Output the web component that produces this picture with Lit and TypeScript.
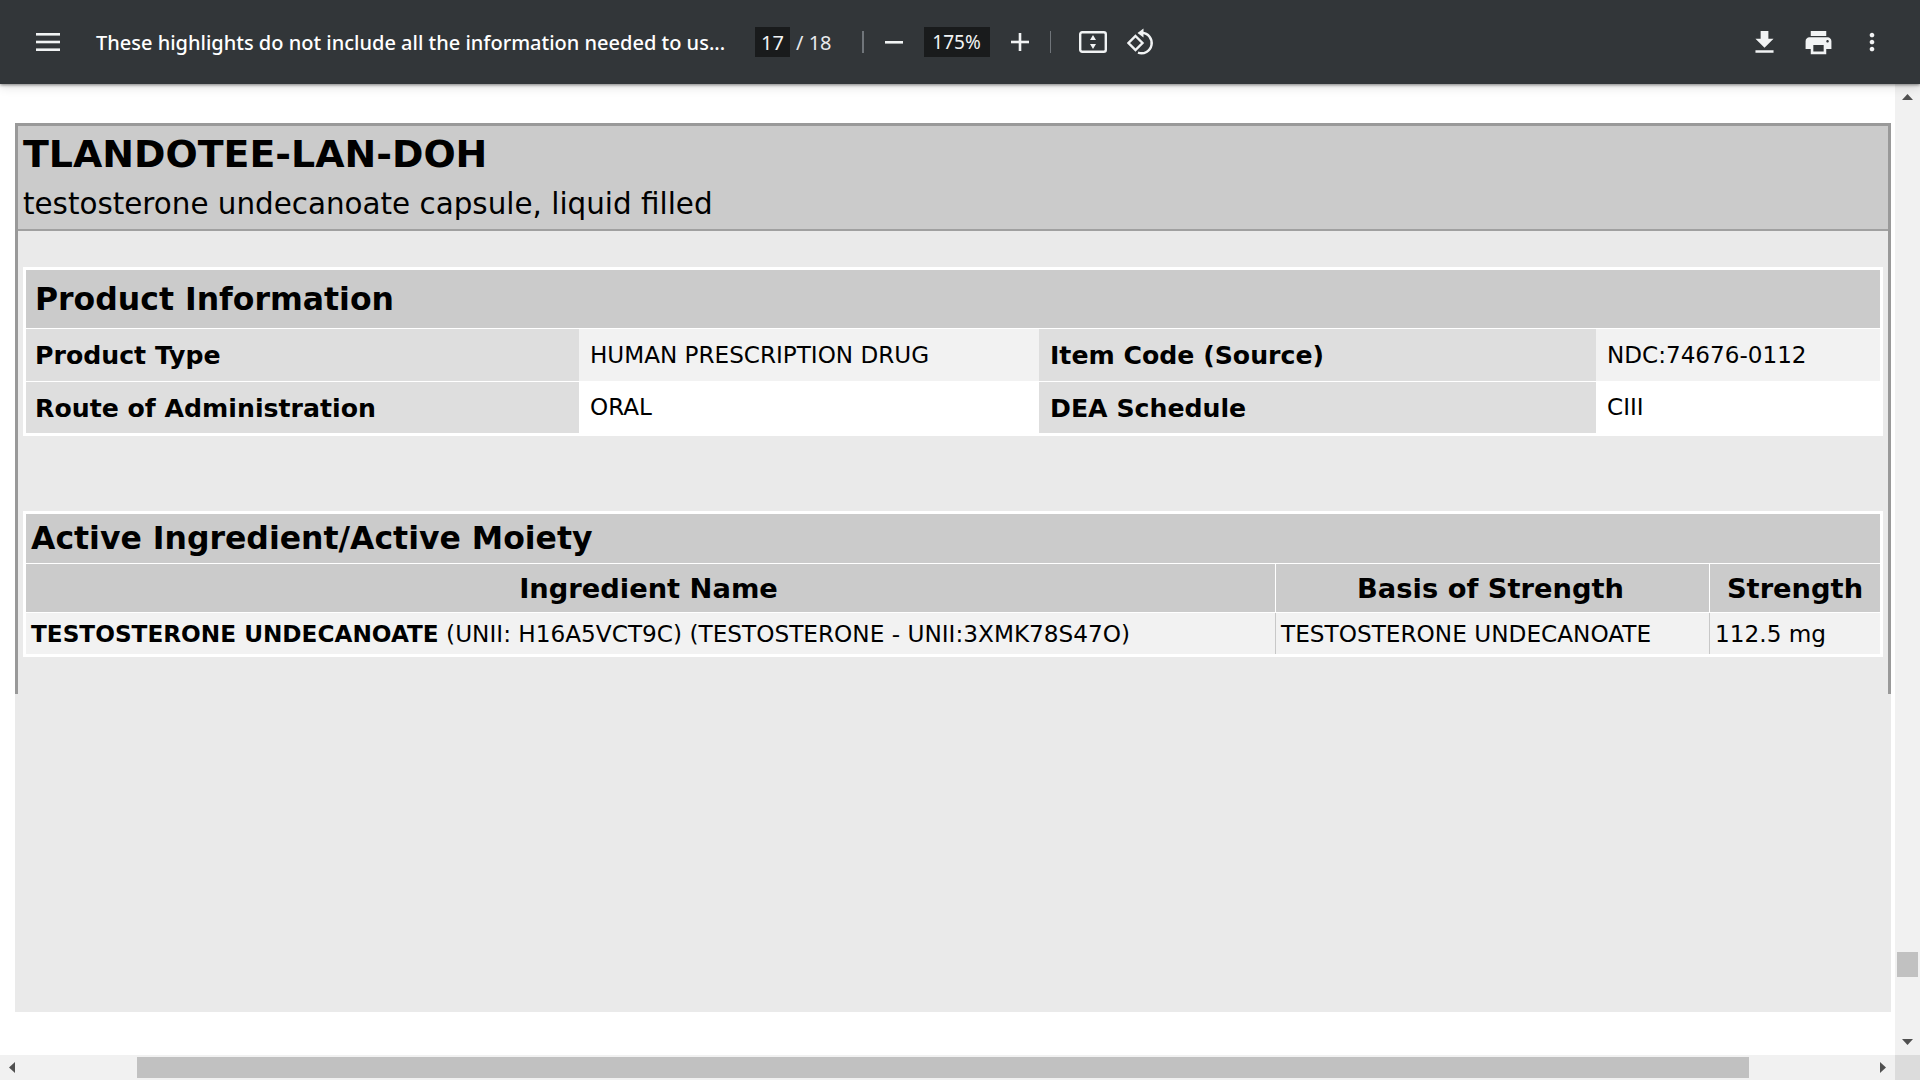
import { LitElement, html, css } from "lit";
import { customElement } from "lit/decorators.js";

@customElement("app-root")
export class AppRoot extends LitElement {
  static styles = css`
    :host { display: flex; flex-direction: column; width: 1920px; height: 1080px; overflow: hidden; background: #fff; font-family: "DejaVu Sans", sans-serif; color: #000; }
    * { box-sizing: border-box; }
    .toolbar { position: relative; z-index: 2; flex: none; height: 84px; background: #323639; box-shadow: 0 1px 3px rgba(0,0,0,.45), 0 3px 10px rgba(0,0,0,.12); display: flex; align-items: center; color: #f1f3f4; font-family: "Noto Sans", sans-serif; }
    .toolbar svg { display: block; flex: none; fill: #f1f3f4; }
    .menu { margin-left: 36px; }
    .doc-title { margin-left: 36px; width: 659px; font-size: 20px; font-weight: 500; white-space: nowrap; color: #fff; }
    .box { height: 30px; background: #191b1c; display: flex; align-items: center; justify-content: center; font-size: 20px; }
    .page-box { width: 35px; }
    .total { margin-left: 6px; width: 66px; font-size: 20px; white-space: nowrap; color: #e8eaed; }
    .sep { width: 1.5px; height: 22px; background: #70757a; flex: none; }
    .minus { margin-left: 21px; }
    .zoom-box { margin-left: 21px; width: 66px; font-size: 19px; }
    .plus { margin-left: 21px; }
    .sep2 { margin-left: 21px; }
    .fit { margin-left: 28px; }
    .rotate { margin-left: 20px; }
    .spacer { flex: 1; }
    .download { margin-right: 23px; }
    .print { margin-right: 24px; }
    .more { margin-right: 34px; }

    .middle { flex: 1; min-height: 0; display: flex; }
    .viewer { flex: 1; min-width: 0; padding: 39px 4px 43px 15px; display: flex; }
    .page { flex: 1; background: #eaeaea; }
    .frame { height: 571px; border: 3px solid #999; border-bottom: 0; }
    .head { height: 105px; background: #cbcbcb; border-bottom: 2px solid #a0a0a0; padding-left: 5px; }
    .head h1 { margin: 0; padding-top: 6px; font-size: 37.9px; line-height: 45px; font-weight: 700; }
    .head p { margin: 0; padding-top: 9px; font-size: 29.4px; line-height: 36px; }
    .tbl { margin: 0 5px; background: #fff; padding: 3px; display: grid; }
    .info { margin-top: 36px; grid-template-columns: 553px 460px 557px 284px; grid-template-rows: 58px 52px 51px; row-gap: 1px; }
    .active { margin-top: 75px; grid-template-columns: 1249px 1px 433px 1px 170px; grid-template-rows: 49px 48px 41px; row-gap: 1px; }
    .cell { display: flex; align-items: center; white-space: nowrap; }
    .title { grid-column: 1 / -1; background: #cbcbcb; font-weight: 700; font-size: 31.5px; }
    .info .title { padding-left: 9px; }
    .active .title { padding-left: 5px; padding-bottom: 1px; }
    .lab { background: #dedede; font-weight: 700; font-size: 25.2px; padding-left: 9px; }
    .lab.c3 { padding-left: 11px; }
    .lab.low { padding-top: 2px; }
    .val { font-size: 23.1px; padding-left: 11px; padding-bottom: 1px; }
    .r1 { background: #f2f2f2; }
    .r2 { background: #fff; }
    .th { background: #cbcbcb; justify-content: center; font-weight: 700; font-size: 27.3px; padding-top: 1px; }
    .th.shift { padding-right: 4px; }
    .td { background: #f2f2f2; font-size: 23.2px; padding-left: 5px; }
    .td b { font-weight: 700; }
    .td span { white-space: pre; }
    .w { background: #fff; }
    .g { background: #c8c8c8; }

    .vbar { flex: none; width: 25px; background: #f1f1f1; display: flex; flex-direction: column; align-items: center; }
    .vbar .up { margin-top: 10px; }
    .vbar .vthumb { margin-top: 852px; width: 21px; height: 25px; background: #c1c1c1; }
    .vbar .down { margin-top: 62px; }
    .hrow { flex: none; height: 25px; display: flex; }
    .hbar { flex: 1; background: #f1f1f1; display: flex; align-items: center; padding: 0 9px; }
    .hthumb { margin-left: 122px; width: 1612px; height: 21px; background: #c1c1c1; }
    .hbar .right { margin-left: 131px; }
    .corner { width: 25px; background: #dcdcdc; }
    .arrow { display: block; flex: none; fill: #505050; }
  `;

  render() {
    return html`
      <div class="toolbar">
        <svg class="menu" width="24" height="18" viewBox="0 0 24 18"><rect width="24" height="2.6"/><rect y="7.7" width="24" height="2.6"/><rect y="15.4" width="24" height="2.6"/></svg>
        <div class="doc-title">These highlights do not include all the information needed to us...</div>
        <div class="box page-box">17</div>
        <div class="total">/ 18</div>
        <div class="sep"></div>
        <svg class="minus" width="18" height="3" viewBox="0 0 18 3"><rect width="18" height="2.6"/></svg>
        <div class="box zoom-box">175%</div>
        <svg class="plus" width="18" height="18" viewBox="0 0 18 18"><rect y="7.7" width="18" height="2.6"/><rect x="7.7" width="2.6" height="18"/></svg>
        <div class="sep sep2"></div>
        <svg class="fit" width="28" height="22" viewBox="0 0 28 22"><rect x="1.2" y="1.2" width="25.6" height="19.6" rx="2" fill="none" stroke="#f1f3f4" stroke-width="2.4"/><path d="M11 9h6l-3-5zM11 13h6l-3 5z"/></svg>
        <svg class="rotate" width="28" height="28" viewBox="0 0 28 28"><path d="M8.5 8l7 7-7 7-7-7z" fill="none" stroke="#f1f3f4" stroke-width="2.4"/><path d="M15 4.7a10.300 10.300 0 1 1-4 20" fill="none" stroke="#f1f3f4" stroke-width="2.4"/><path d="M16.500 0.500v9L10.500 5z"/></svg>
        <div class="spacer"></div>
        <svg class="download" width="31" height="31" viewBox="0 0 24 24"><path d="M19 9h-4V3H9v6H5l7 7 7-7zM5 18v2h14v-2H5z"/></svg>
        <svg class="print" width="31" height="31" viewBox="0 0 24 24"><path d="M19 8H5c-1.66 0-3 1.34-3 3v6h4v4h12v-4h4v-6c0-1.66-1.34-3-3-3zm-3 11H8v-5h8v5zm3-7c-.55 0-1-.45-1-1s.45-1 1-1 1 .45 1 1-.45 1-1 1zm-1-9H6v4h12V3z"/></svg>
        <svg class="more" width="28" height="28" viewBox="0 0 24 24"><path d="M12 8c1.1 0 2-.9 2-2s-.9-2-2-2-2 .9-2 2 .9 2 2 2zm0 2c-1.1 0-2 .9-2 2s.9 2 2 2 2-.9 2-2-.9-2-2-2zm0 6c-1.1 0-2 .9-2 2s.9 2 2 2 2-.9 2-2-.9-2-2-2z"/></svg>
      </div>
      <div class="middle">
        <div class="viewer">
          <div class="page">
            <div class="frame">
              <div class="head">
                <h1>TLANDOTEE-LAN-DOH</h1>
                <p>testosterone undecanoate capsule, liquid filled</p>
              </div>
              <div class="tbl info">
                <div class="cell title">Product Information</div>
                <div class="cell lab">Product Type</div>
                <div class="cell val r1">HUMAN PRESCRIPTION DRUG</div>
                <div class="cell lab c3">Item Code (Source)</div>
                <div class="cell val r1">NDC:74676-0112</div>
                <div class="cell lab low">Route of Administration</div>
                <div class="cell val r2">ORAL</div>
                <div class="cell lab c3 low">DEA Schedule</div>
                <div class="cell val r2">CIII</div>
              </div>
              <div class="tbl active">
                <div class="cell title">Active Ingredient/Active Moiety</div>
                <div class="cell th shift">Ingredient Name</div><div class="w"></div>
                <div class="cell th shift">Basis of Strength</div><div class="w"></div>
                <div class="cell th">Strength</div>
                <div class="cell td"><span><b>TESTOSTERONE UNDECANOATE</b> (UNII: H16A5VCT9C) (TESTOSTERONE - UNII:3XMK78S47O)</span></div><div class="g"></div>
                <div class="cell td">TESTOSTERONE UNDECANOATE</div><div class="g"></div>
                <div class="cell td">112.5 mg</div>
              </div>
            </div>
          </div>
        </div>
        <div class="vbar">
          <svg class="arrow up" width="11" height="6" viewBox="0 0 11 6"><path d="M5.5 0L11 6H0z"/></svg>
          <div class="vthumb"></div>
          <svg class="arrow down" width="11" height="6" viewBox="0 0 11 6"><path d="M0 0h11L5.500 6z"/></svg>
        </div>
      </div>
      <div class="hrow">
        <div class="hbar">
          <svg class="arrow left" width="6" height="11" viewBox="0 0 6 11"><path d="M6 0v11L0 5.500z"/></svg>
          <div class="hthumb"></div>
          <svg class="arrow right" width="6" height="11" viewBox="0 0 6 11"><path d="M0 0l6 5.500L0 11z"/></svg>
        </div>
        <div class="corner"></div>
      </div>
    `;
  }
}
